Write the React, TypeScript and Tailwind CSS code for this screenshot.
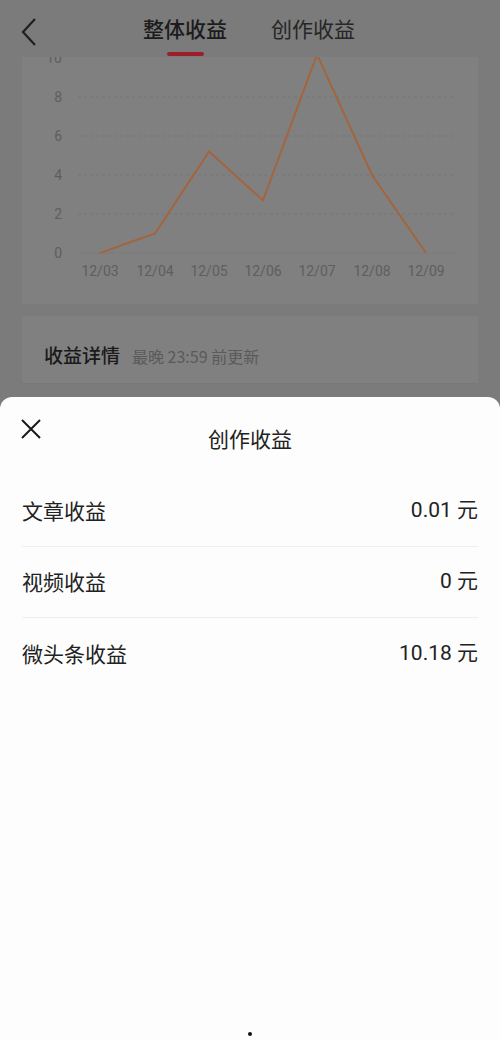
import React from "react"

const xs = [100, 155, 209, 263, 317, 372, 426]
const values = [0, 1, 5.2, 2.7, 10.18, 4, 0]
const dates = ["12/03", "12/04", "12/05", "12/06", "12/07", "12/08", "12/09"]
const yOf = (v: number) => 253 - v * 19.5

const Chart = () => {
  const points = xs.map((x, i) => `${x},${yOf(values[i])}`).join(" ")
  return (
    <svg width="456" height="247" viewBox="22 57 456 247" className="block">
      {[2, 4, 6, 8].map((v) => (
        <line key={v} x1="78" x2="455" y1={yOf(v)} y2={yOf(v)} stroke="#767676" strokeWidth="1" strokeDasharray="3 3" />
      ))}
      <line x1="78" x2="455" y1="253" y2="253" stroke="#7a7a7a" strokeWidth="1" />
      {[0, 2, 4, 6, 8, 10].map((v) => (
        <text key={v} x="62" y={yOf(v) + 5} textAnchor="end" fontSize="14" fill="#5e5e5e" fontFamily="Roboto, sans-serif">
          {v}
        </text>
      ))}
      {dates.map((d, i) => (
        <text key={d} x={xs[i]} y="276" textAnchor="middle" fontSize="14" fill="#5e5e5e" fontFamily="Roboto, sans-serif">
          {d}
        </text>
      ))}
      <polyline points={points} fill="none" stroke="#a3643e" strokeWidth="2" strokeLinejoin="miter" />
    </svg>
  )
}

const rows = [
  { label: "文章收益", value: "0.01 元" },
  { label: "视频收益", value: "0 元" },
  { label: "微头条收益", value: "10.18 元" },
]

export default function App() {
  return (
    <div
      className="relative w-[500px] h-[1040px] overflow-hidden bg-[#7b7b7b]"
      style={{ fontFamily: "'Noto Sans CJK SC', Roboto, sans-serif" }}
    >
      <div className="h-[57px] flex items-start relative">
        <svg className="absolute left-[18px] top-[17px]" width="22" height="30" viewBox="0 0 22 30">
          <path d="M17 2 L5 15 L17 28" fill="none" stroke="#1f1f1f" strokeWidth="2.2" />
        </svg>
        <div className="flex gap-[44px] pl-[143px] pt-[12px]">
          <div className="flex flex-col items-center">
            <span className="text-[21px] leading-[32px] font-medium text-[#1c1c1c]">整体收益</span>
            <div className="mt-[8px] w-[37px] h-[4px] rounded-full bg-[#9b1e2a]" />
          </div>
          <span className="text-[21px] leading-[32px] text-[#262626]">创作收益</span>
        </div>
      </div>

      <div className="mx-[22px] bg-[#808080]">
        <Chart />
      </div>

      <div className="mx-[22px] mt-[12px] h-[68px] bg-[#808080] border-b border-[#787878] flex items-center px-[22px] pt-[12px]">
        <span className="text-[19px] font-medium text-[#1a1a1a]">收益详情</span>
        <span className="ml-[12px] text-[16px] text-[#5a5a5a]">最晚 23:59 前更新</span>
      </div>

      <div className="absolute left-0 right-0 top-[397px] bottom-0 bg-[#fdfdfd] rounded-t-[12px]">
        <div className="relative h-[79px] flex justify-center pt-[24px]">
          <svg className="absolute left-[21px] top-[22px]" width="20" height="20" viewBox="0 0 20 20">
            <path d="M1 1 L19 19 M19 1 L1 19" stroke="#1a1a1a" strokeWidth="2" />
          </svg>
          <span className="text-[21px] leading-[34px] text-[#222]">创作收益</span>
        </div>
        <div className="px-[22px]">
          {rows.map((r, i) => (
            <div
              key={r.label}
              className={`h-[71px] flex items-center justify-between ${i < rows.length - 1 ? "border-b border-[#eeeeee]" : ""}`}
            >
              <span className="text-[21px] text-[#222]">{r.label}</span>
              <span className="text-[21px] text-[#222]" style={{ fontFamily: "Roboto, 'Noto Sans CJK SC', sans-serif" }}>
                {r.value}
              </span>
            </div>
          ))}
        </div>
        <div className="absolute left-[248px] bottom-[4px] w-[4px] h-[4px] rounded-full bg-[#111]" />
      </div>
    </div>
  )
}
